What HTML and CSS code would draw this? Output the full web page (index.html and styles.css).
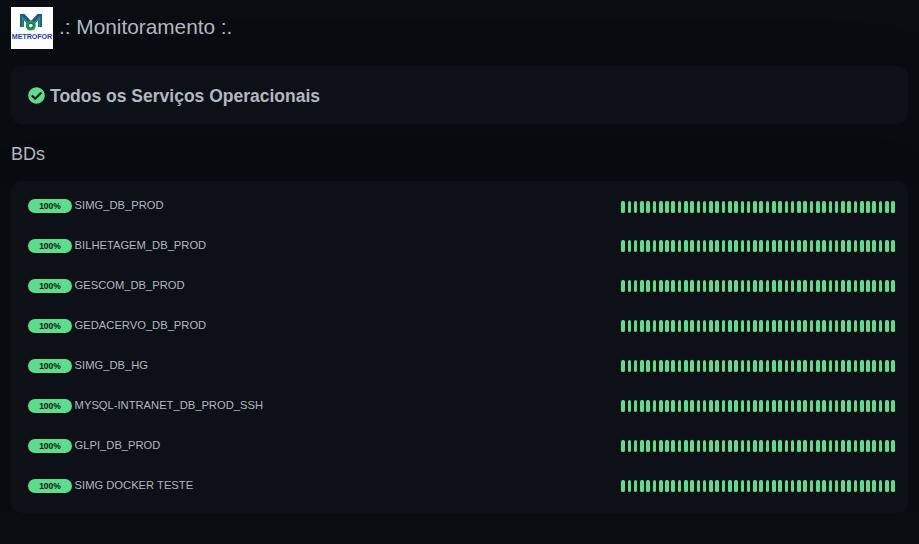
FILE: index.html
```html
<!DOCTYPE html>
<html lang="pt-BR">
<head>
    <meta charset="UTF-8">
    <meta name="viewport" content="width=device-width, initial-scale=1.0">
    <title>.: Monitoramento :.</title>
    <link rel="stylesheet" href="styles.css">
</head>
<body>

    <div class="container">
        <header class="page-title">
            <div class="logo">
                <svg class="logo-mark" viewBox="0 0 24 18" width="24" height="18">
                    <path fill="#1d4fb8" d="M0 0h4.500l6.500 7 6.500-7H22v13h-4V6l-7 7.500L4 6v7H0z"/>
                    <path fill="none" stroke="#1f9e3a" stroke-width="1.800" d="M2.500 13V3.500l8.500 9 8.500-9V13"/>
                    <circle cx="10.800" cy="11.600" r="5" fill="#1f9e3a"/>
                    <circle cx="10.800" cy="11.600" r="2.800" fill="#1d4fb8"/>
                    <circle cx="10.800" cy="11.600" r="1.900" fill="#fff"/>
                </svg>
                <span class="logo-text">METROFOR</span>
            </div>
            <h1>.: Monitoramento :.</h1>
        </header>

        <div class="card status-card">
            <svg class="status-icon" viewBox="0 0 512 512" width="17" height="17">
                <path fill="#5cdd8b" d="M504 256c0 136.967-111.033 248-248 248S8 392.967 8 256 119.033 8 256 8s248 111.033 248 248zM227.314 387.314l184-184c6.248-6.248 6.248-16.379 0-22.627l-22.627-22.627c-6.248-6.249-16.379-6.249-22.628 0L216 308.118l-70.059-70.059c-6.248-6.248-16.379-6.248-22.628 0l-22.627 22.627c-6.248 6.248-6.248 16.379 0 22.627l104 104c6.249 6.249 16.379 6.249 22.628.001z"/>
            </svg>
            <span class="status-text">Todos os Serviços Operacionais</span>
        </div>

        <h2>BDs</h2>

        <div class="card monitor-list" id="monitorList"></div>
    </div>

    <script src="script.js"></script>
</body>
</html>
```

FILE: styles.css
```css
body {
    font-family: "Liberation Sans", Arial, sans-serif;
    margin: 0;
    padding: 0;
    background-color: #090c10;
    color: #b1b8c0;
}
.container {
    padding: 7px 11px 0;
}
.page-title {
    display: flex;
    align-items: center;
    gap: 6px;
}
.page-title h1 {
    margin: 0 0 2px;
    font-size: 20.8px;
    font-weight: 400;
}
.logo {
    width: 42px;
    height: 42px;
    background-color: #fff;
    display: flex;
    flex-direction: column;
    align-items: center;
    padding-top: 7px;
    box-sizing: border-box;
}
.logo-mark {
    display: block;
}
.logo-text {
    margin-top: 1px;
    font-size: 7.2px;
    line-height: 8px;
    font-weight: 700;
    color: #1a3fb0;
    letter-spacing: -0.1px;
}
.card {
    background-color: #0d1117;
    border-radius: 10px;
    box-shadow: 0 15px 70px rgba(0, 0, 0, 0.1);
}
.status-card {
    margin-top: 17px;
    height: 58px;
    padding: 0 17px;
    display: flex;
    align-items: center;
    gap: 5px;
    font-size: 17.5px;
    font-weight: 700;
}
.status-text {
    margin-top: 2px;
}
h2 {
    margin: 20px 0 17px;
    font-size: 18px;
    line-height: 20px;
    font-weight: 400;
}
.monitor-list {
    padding: 4px 11.75px 8px 17px;
}
.monitor-row {
    height: 40px;
    display: flex;
    align-items: center;
    justify-content: space-between;
}
.monitor-name {
    display: flex;
    align-items: center;
    gap: 2.6px;
    font-size: 11.2px;
}
.badge {
    width: 44px;
    height: 14px;
    border-radius: 7px;
    background-color: #5cdd8b;
    color: #0d1117;
    font-size: 8.5px;
    font-weight: 700;
    line-height: 14px;
    text-align: center;
    margin-top: 2px;
}
.beats {
    display: flex;
    margin-top: 2px;
}
.monitor-row:first-child .beats {
    margin-top: 4px;
}
.beat {
    width: 3.6px;
    height: 12px;
    margin: 0 1.35px;
    border-radius: 1.5px;
    background-color: #5cdd8b;
}
```

FILE: script.js
```js
// monitores da lista
const monitors = [
    "SIMG_DB_PROD",
    "BILHETAGEM_DB_PROD",
    "GESCOM_DB_PROD",
    "GEDACERVO_DB_PROD",
    "SIMG_DB_HG",
    "MYSQL-INTRANET_DB_PROD_SSH",
    "GLPI_DB_PROD",
    "SIMG DOCKER TESTE"
];

const list = document.getElementById("monitorList");
const beats = '<span class="beat"></span>'.repeat(44);

monitors.forEach(function(name) {
    list.innerHTML += `
        <div class="monitor-row">
            <div class="monitor-name"><span class="badge">100%</span><span>${name}</span></div>
            <div class="beats">${beats}</div>
        </div>`;
});
```
